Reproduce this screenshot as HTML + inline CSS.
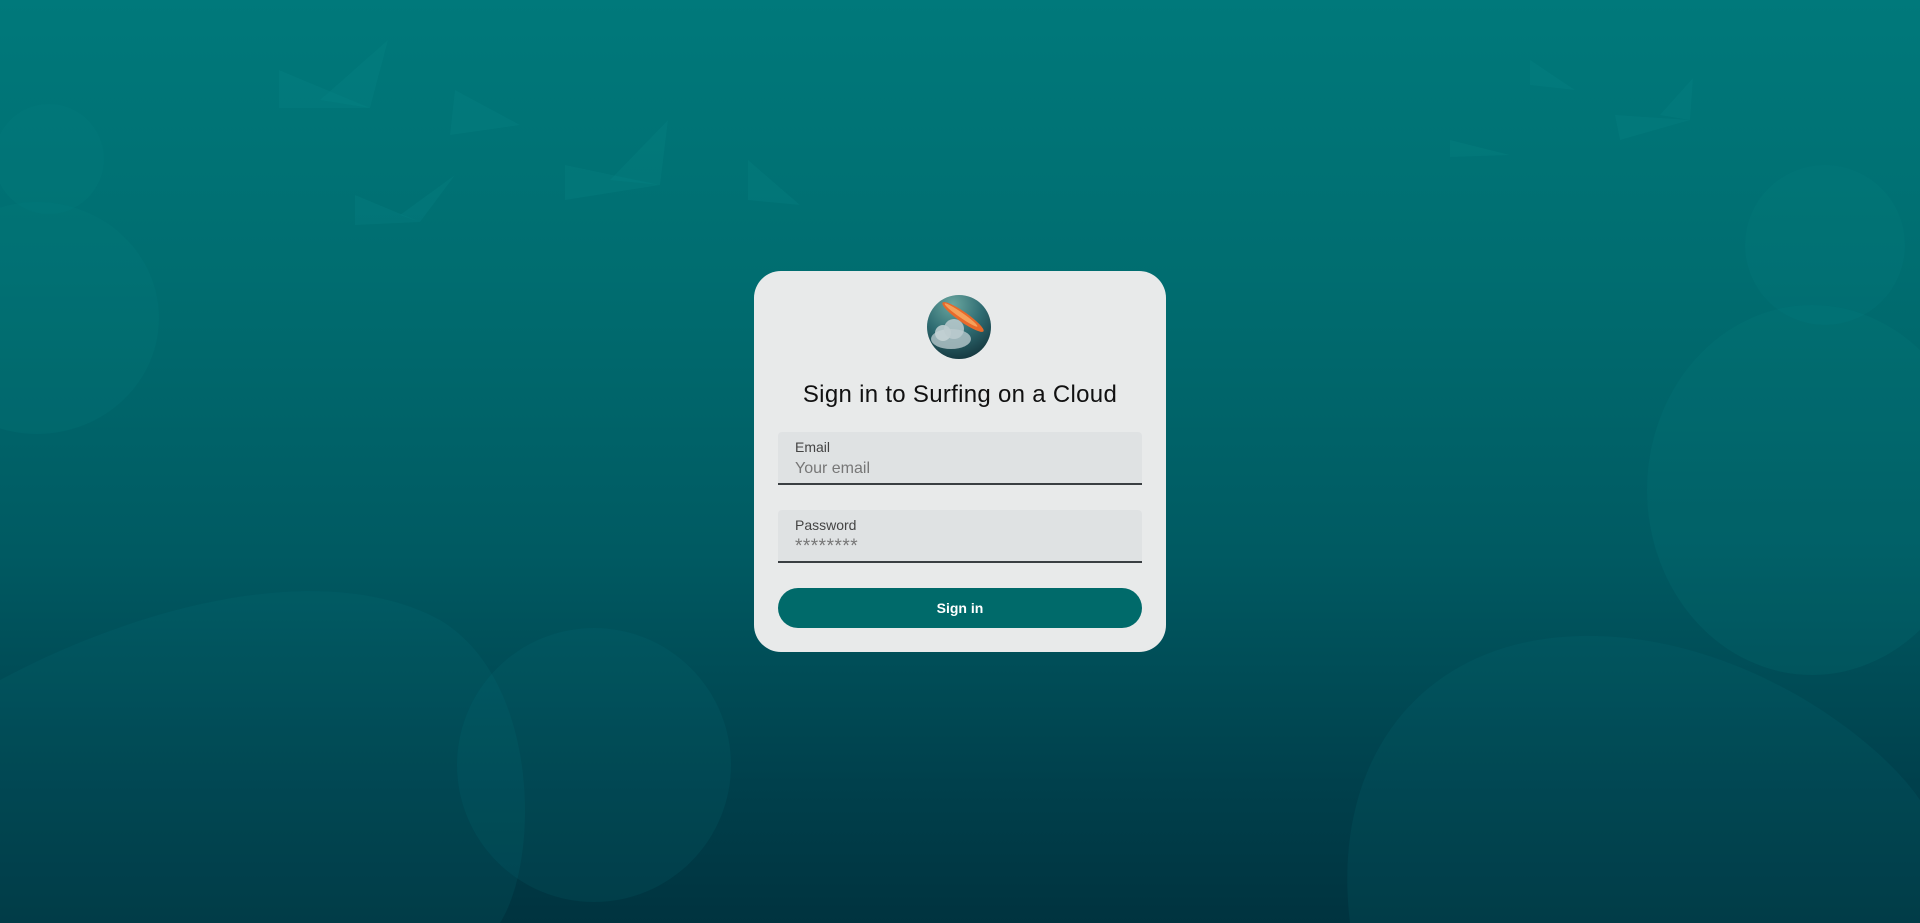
<!DOCTYPE html>
<html><head><meta charset="utf-8"><style>
html,body{margin:0;padding:0;width:1920px;height:923px;overflow:hidden;font-family:"Liberation Sans",sans-serif}
body{background:linear-gradient(180deg,#00797b 0%,#006d70 30%,#005a62 60%,#00404c 85%,#00333f 100%);position:relative}
svg.bg{position:absolute;left:0;top:0}
.card{position:absolute;left:754px;top:271px;width:412px;height:381px;background:#e8eaea;border-radius:27px}
.logo{position:absolute;left:173px;top:24px;width:64px;height:64px;border-radius:50%;background:radial-gradient(circle at 40% 15%,#6aa69f 0%,#2f6c72 45%,#0b232b 100%);overflow:hidden}
h1{position:absolute;left:0;width:412px;top:110px;margin:0;text-align:center;font-weight:normal;font-size:24px;color:#111;letter-spacing:0.3px}
.field{position:absolute;left:24px;width:364px;height:51px;background:#dfe2e3;border-bottom:2px solid #3a3f42;border-radius:4px 4px 0 0}
.field .l{position:absolute;left:17px;top:7px;font-size:14px;color:#444}
.field .p{position:absolute;left:17px;top:28px;font-size:16px;color:#777}
.field .s{font-size:19px;top:26px;letter-spacing:0.5px}
.btn{position:absolute;left:24px;top:317px;width:364px;height:40px;border-radius:20px;background:#006a6a;color:#fff;font-weight:bold;font-size:14px;text-align:center;line-height:40px}
</style></head><body>
<svg class="bg" width="1920" height="923" viewBox="0 0 1920 923">
<g fill="#0a8a8a" fill-opacity="0.14">
<circle cx="49" cy="159" r="55"/>
<ellipse cx="37" cy="318" rx="122" ry="116"/>
<circle cx="1825" cy="245" r="80"/>
<ellipse cx="1812" cy="490" rx="165" ry="185"/>
</g>
<g fill="#0a7a80" fill-opacity="0.13">
<path d="M0 680 C150 600 330 560 440 620 C540 680 540 860 500 923 L0 923Z"/>
<circle cx="594" cy="765" r="137"/>
<path d="M1350 923 C1330 760 1420 640 1580 636 C1740 632 1880 740 1920 800 L1920 923Z"/>
</g>
<g fill="#0a8a8c" fill-opacity="0.2">
<polygon points="279,70 370,108 279,108"/><polygon points="370,108 388,40 320,100"/>
<polygon points="455,90 520,125 450,135"/>
<polygon points="565,165 660,185 565,200"/><polygon points="660,185 668,120 610,180"/>
<polygon points="355,195 420,222 355,225"/><polygon points="420,222 455,175 400,215"/>
<polygon points="748,160 800,205 748,200"/>
<polygon points="1530,60 1575,90 1530,85"/>
<polygon points="1450,140 1510,155 1450,157"/>
<polygon points="1615,115 1690,120 1620,140"/><polygon points="1690,120 1693,78 1660,115"/>
</g>
</svg>
<div class="card">
<div class="logo">
<svg width="64" height="64" viewBox="0 0 64 64">
<ellipse cx="24" cy="44" rx="20" ry="10" fill="#b8c8cc" opacity="0.8"/>
<circle cx="16" cy="38" r="8" fill="#c7d3d6" opacity="0.85"/>
<circle cx="27" cy="34" r="10" fill="#bccbcf" opacity="0.85"/>
<ellipse cx="36" cy="22" rx="25" ry="5" transform="rotate(35 36 22)" fill="#e8692a"/>
<ellipse cx="34" cy="20" rx="20" ry="2.5" transform="rotate(35 34 20)" fill="#f5a05a"/>
</svg>
</div>
<h1>Sign in to Surfing on a Cloud</h1>
<div class="field" style="top:161px"><div class="l">Email</div><div class="p">Your email</div></div>
<div class="field" style="top:239px"><div class="l">Password</div><div class="p s">********</div></div>
<div class="btn">Sign in</div>
</div>
</body></html>
